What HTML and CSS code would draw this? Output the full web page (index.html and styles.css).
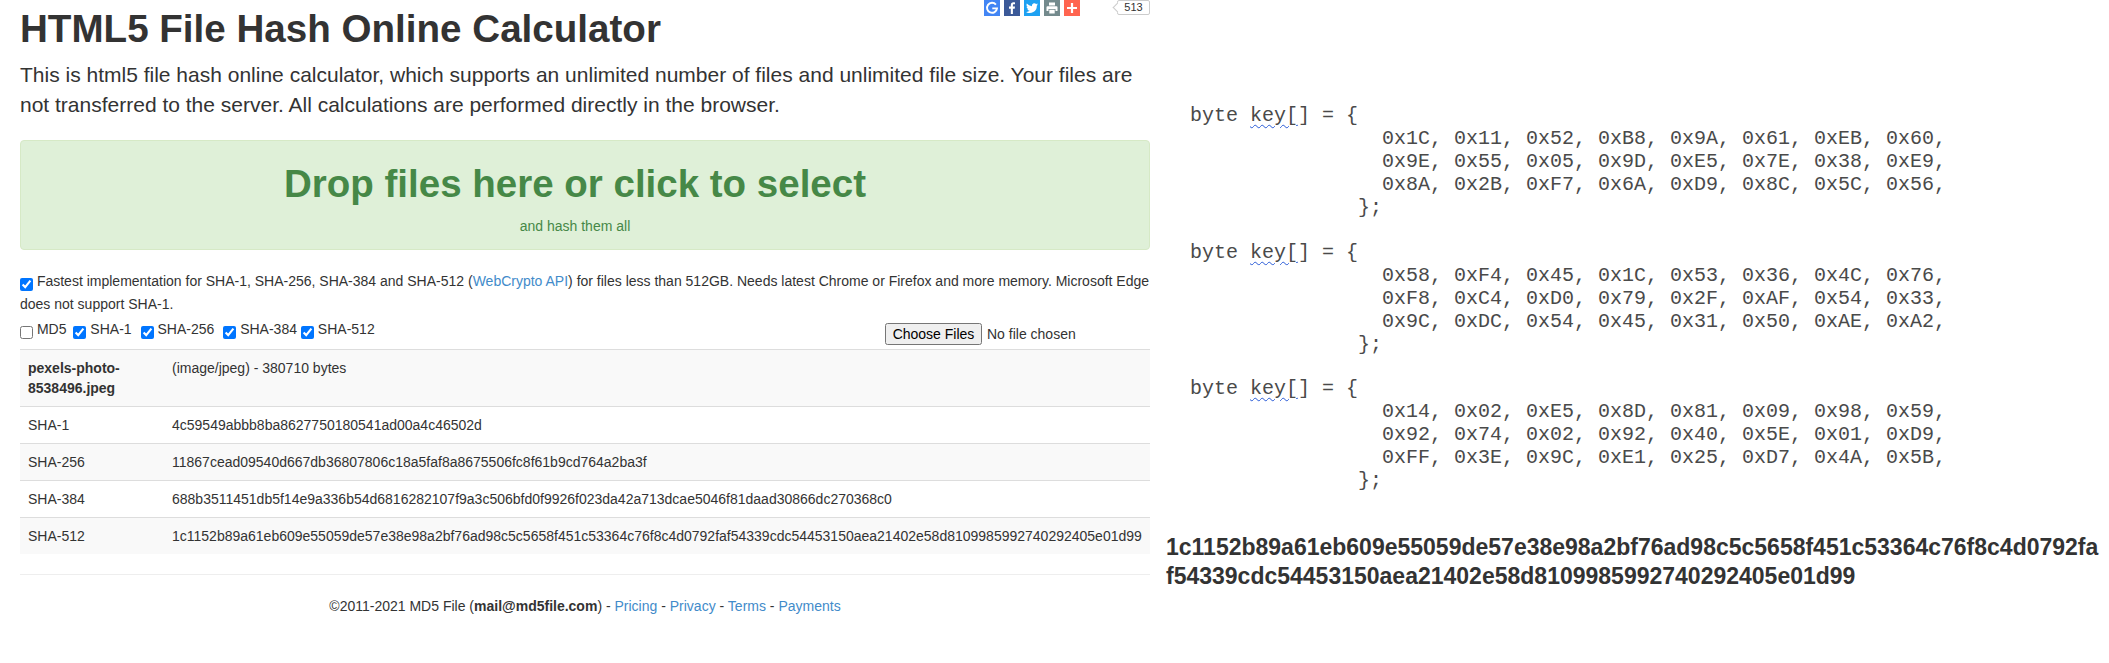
FILE: index.html
```html
<!DOCTYPE html>
<html lang="en">
<head>
<meta charset="utf-8">
<title>HTML5 File Hash Online Calculator</title>
<link rel="stylesheet" href="styles.css">
</head>
<body>
<main class="page">
  <section class="calculator">
    <div class="share">
      <a class="share-btn google"><svg viewBox="0 0 16 16"><path d="M11.900 4.600A5 5 0 1 0 13 8.400H8.300" fill="none" stroke="#fff" stroke-width="1.900"/></svg></a>
      <a class="share-btn facebook"><svg viewBox="0 0 16 16"><path d="M8.900 14V8.700h1.800l.3-2.100H8.900V5.300c0-.6.2-1 1-1H11V2.400C10.800 2.400 10.200 2.300 9.500 2.300 7.900 2.300 6.800 3.300 6.800 5.100v1.500H5v2.100h1.800V14z" fill="#fff"/></svg></a>
      <a class="share-btn twitter"><svg viewBox="0 0 16 16"><path d="M14 4.300c-.4.200-.9.300-1.400.4.500-.3.900-.8 1.100-1.400-.5.300-1 .5-1.600.6a2.500 2.500 0 0 0-4.200 2.300A7 7 0 0 1 2.800 3.600a2.500 2.500 0 0 0 .8 3.300c-.4 0-.8-.1-1.100-.3 0 1.200.8 2.200 2 2.500-.4.100-.8.100-1.100 0 .3 1 1.200 1.700 2.300 1.700A5 5 0 0 1 2 11.900 7 7 0 0 0 12.800 5.700c.5-.4.900-.9 1.200-1.400z" fill="#fff"/></svg></a>
      <a class="share-btn print"><svg viewBox="0 0 16 16"><path d="M5 2.500h6v3H5zM3.500 6.300h9a1 1 0 0 1 1 1v3.700H11.500V9h-7v2H2.500V7.300a1 1 0 0 1 1-1zM5.300 9.800h5.400V13.500H5.300z" fill="#fff"/></svg></a>
      <a class="share-btn more"><svg viewBox="0 0 16 16"><path d="M6.900 3h2.200v3.900H13v2.200H9.100V13H6.900V9.100H3V6.900h3.900z" fill="#fff"/></svg></a>
      <span class="share-count">513</span>
    </div>
    <h1 class="title">HTML5 File Hash Online Calculator</h1>
    <p class="lead">This is html5 file hash online calculator, which supports an unlimited number of files and unlimited file size. Your files are not transferred to the server. All calculations are performed directly in the browser.</p>
    <div class="dropzone">
      <h2 class="drop-title">Drop files here or click to select</h2>
      <p class="drop-sub">and hash them all</p>
    </div>
    <p class="fast"><input class="check" type="checkbox" checked> Fastest implementation for SHA-1, SHA-256, SHA-384 and SHA-512 (<a href="#">WebCrypto API</a>) for files less than 512GB. Needs latest Chrome or Firefox and more memory. Microsoft Edge does not support SHA-1.</p>
    <div class="options">
      <div class="algos">
        <label class="algo gap-7"><input class="check" type="checkbox"> MD5</label>
        <label class="algo gap-9"><input class="check" type="checkbox" checked> SHA-1</label>
        <label class="algo gap-9"><input class="check" type="checkbox" checked> SHA-256</label>
        <label class="algo gap-4"><input class="check" type="checkbox" checked> SHA-384</label>
        <label class="algo"><input class="check" type="checkbox" checked> SHA-512</label>
      </div>
      <input class="file" type="file" multiple>
    </div>
    <table class="results">
      <tr class="odd"><th>pexels-photo-8538496.jpeg</th><td>(image/jpeg) - 380710 bytes</td></tr>
      <tr><td>SHA-1</td><td>4c59549abbb8ba8627750180541ad00a4c46502d</td></tr>
      <tr class="odd"><td>SHA-256</td><td>11867cead09540d667db36807806c18a5faf8a8675506fc8f61b9cd764a2ba3f</td></tr>
      <tr><td>SHA-384</td><td>688b3511451db5f14e9a336b54d6816282107f9a3c506bfd0f9926f023da42a713dcae5046f81daad30866dc270368c0</td></tr>
      <tr class="odd"><td>SHA-512</td><td>1c1152b89a61eb609e55059de57e38e98a2bf76ad98c5c5658f451c53364c76f8c4d0792faf54339cdc54453150aea21402e58d8109985992740292405e01d99</td></tr>
    </table>
    <footer class="footer">©2011-2021 MD5 File (<strong>mail@md5file.com</strong>) - <a href="#">Pricing</a> - <a href="#">Privacy</a> - <a href="#">Terms</a> - <a href="#">Payments</a></footer>
  </section>
  <section class="notes">
<pre class="code">byte <span class="squiggle">key[</span>] = {
                0x1C, 0x11, 0x52, 0xB8, 0x9A, 0x61, 0xEB, 0x60,
                0x9E, 0x55, 0x05, 0x9D, 0xE5, 0x7E, 0x38, 0xE9,
                0x8A, 0x2B, 0xF7, 0x6A, 0xD9, 0x8C, 0x5C, 0x56,
              };</pre>
<pre class="code">byte <span class="squiggle">key[</span>] = {
                0x58, 0xF4, 0x45, 0x1C, 0x53, 0x36, 0x4C, 0x76,
                0xF8, 0xC4, 0xD0, 0x79, 0x2F, 0xAF, 0x54, 0x33,
                0x9C, 0xDC, 0x54, 0x45, 0x31, 0x50, 0xAE, 0xA2,
              };</pre>
<pre class="code">byte <span class="squiggle">key[</span>] = {
                0x14, 0x02, 0xE5, 0x8D, 0x81, 0x09, 0x98, 0x59,
                0x92, 0x74, 0x02, 0x92, 0x40, 0x5E, 0x01, 0xD9,
                0xFF, 0x3E, 0x9C, 0xE1, 0x25, 0xD7, 0x4A, 0x5B,
              };</pre>
    <p class="digest">1c1152b89a61eb609e55059de57e38e98a2bf76ad98c5c5658f451c53364c76f8c4d0792faf54339cdc54453150aea21402e58d8109985992740292405e01d99</p>
  </section>
</main>
</body>
</html>
```
FILE: styles.css
```css
* { box-sizing: border-box; }
html, body { margin: 0; padding: 0; background: #fff; }
body { font-family: "Liberation Sans", Arial, sans-serif; font-size: 14px; line-height: 20px; color: #333; }
a { color: #428bca; text-decoration: none; }
.page { display: flex; width: 2109px; height: 663px; overflow: hidden; }
.calculator { flex: 0 0 1130px; margin-left: 20px; position: relative; }
.notes { flex: 1; padding-left: 16px; min-width: 0; }

.share { position: absolute; top: 0; right: 0; display: flex; align-items: flex-start; }
.share-btn { display: block; width: 16px; height: 16px; margin-right: 4px; }
.share-btn svg { display: block; width: 16px; height: 16px; }
.google { background: #4285f4; }
.facebook { background: #3b5998; }
.twitter { background: #1da1f2; }
.print { background: #738a8d; }
.more { background: #ff6550; }
.share-count { position: relative; width: 33px; height: 15px; margin-left: 33px; border: 1px solid #ccc; border-radius: 2px; background: #fff; font-size: 11px; line-height: 13px; text-align: center; color: #333; }
.share-count::before { content: ""; position: absolute; left: -4px; top: 3px; width: 6px; height: 6px; background: #fff; border-left: 1px solid #ccc; border-bottom: 1px solid #ccc; transform: rotate(45deg); }

.title { margin: 0; padding-top: 8px; font-size: 38.600px; line-height: 42px; font-weight: 700; color: #333; }
.lead { margin: 10px 0 0; font-size: 21px; line-height: 30px; font-weight: 400; }
.dropzone { height: 110px; margin-top: 20px; padding: 23px 20px 0 0; border: 1px solid #d6e9c6; border-radius: 4px; background: #dff0d8; color: #468847; text-align: center; }
.drop-title { margin: 0; font-size: 38.500px; line-height: 40px; font-weight: 700; }
.drop-sub { margin: 12px 0 0; font-size: 14px; line-height: 20px; }

.check { width: 13px; height: 13px; margin: 0; vertical-align: -5px; }
.fast { margin: 20px 0 0; line-height: 23px; }
.options { display: flex; justify-content: space-between; height: 33px; align-items: flex-start; }
.algos { display: flex; padding-top: 2px; line-height: 23px; }
.algo { white-space: pre; }
.gap-7 { margin-right: 7px; }
.gap-9 { margin-right: 9px; }
.gap-4 { margin-right: 4px; }
.file { width: 265px; font: 14px "Liberation Sans", Arial, sans-serif; margin-top: 7px; }
.file::file-selector-button { width: 97px; height: 22px; padding: 0; margin-right: 5px; }

.results { width: 100%; border-collapse: collapse; border-spacing: 0; }
.results th, .results td { padding: 8px; border-top: 1px solid #ddd; text-align: left; vertical-align: top; line-height: 20px; }
.results th { width: 144px; font-weight: 700; }
.results td:first-child { width: 144px; }
.odd { background: #f9f9f9; }

.footer { margin-top: 20px; padding-top: 21px; border-top: 1px solid #eee; text-align: center; }

.code { margin: 0 0 21.500px 24px; font-family: "Liberation Mono", "Courier New", monospace; font-size: 20px; line-height: 23px; color: #4a4a4a; }
.code:first-child { margin-top: 104px; }
.squiggle { text-decoration: underline wavy #2a5bd7 1px; text-underline-offset: 3px; }
.digest { width: 936px; margin: 41px 0 0; font-size: 23px; line-height: 29px; font-weight: 700; word-break: break-all; }
```
